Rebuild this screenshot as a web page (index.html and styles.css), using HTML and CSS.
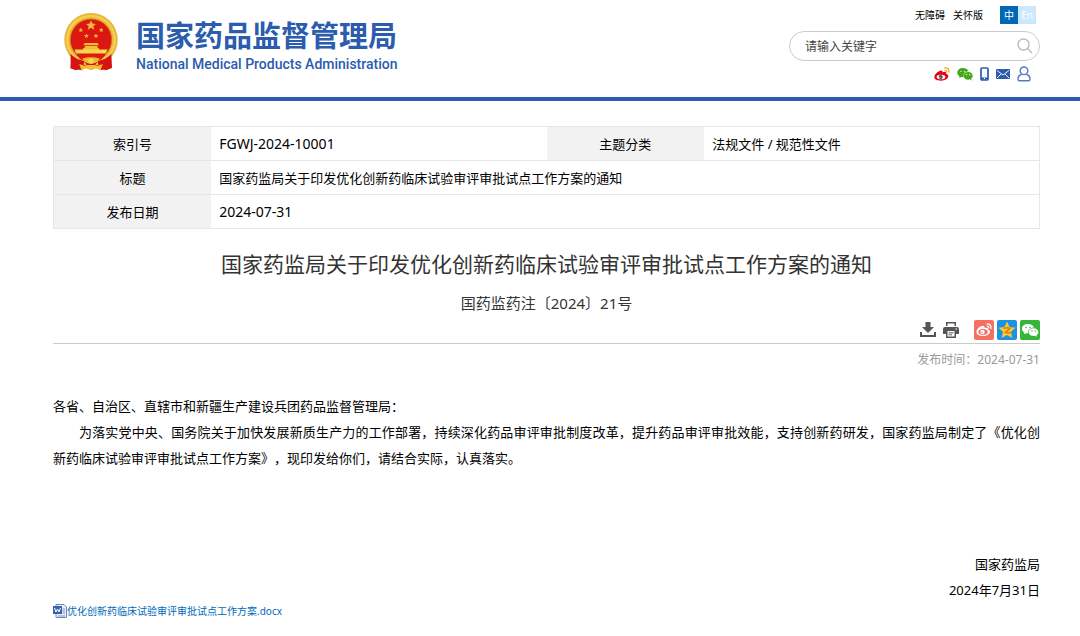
FILE: index.html
```html
<!DOCTYPE html>
<html lang="zh-CN">
<head>
    <meta charset="UTF-8">
    <meta name="viewport" content="width=device-width, initial-scale=1.0">
    <title>国家药监局关于印发优化创新药临床试验审评审批试点工作方案的通知</title>
    <link rel="stylesheet" href="styles.css">
</head>
<body>
    <header class="header">
        <a class="logo" href="#">
            <svg class="emblem" viewBox="0 0 164 176" aria-hidden="true">
                <path d="M24 122 L20 168 L36 174 L60 164 L82 172 L104 164 L128 174 L146 166 L142 122 Z" fill="#d3140f"/>
                <circle cx="82" cy="81" r="81" fill="#e9b234"/>
                <circle cx="82" cy="81" r="72" fill="none" stroke="#f5cd50" stroke-width="8"/>
                <circle cx="82" cy="81" r="63" fill="#dc1710" stroke="#c9891a" stroke-width="2"/>
                <path d="M82 22 l4 10 11 1 -8 7 3 11 -10 -6 -10 6 3 -11 -8 -7 11 -1z" fill="#f5b83c"/>
                <g fill="#f5b83c">
                    <path d="M51 44 l2 5 5 0 -4 4 2 5 -5 -3 -5 3 2 -5 -4 -4 5 0z"/>
                    <path d="M113 44 l2 5 5 0 -4 4 2 5 -5 -3 -5 3 2 -5 -4 -4 5 0z"/>
                    <path d="M68 62 l2 5 5 0 -4 4 2 5 -5 -3 -5 3 2 -5 -4 -4 5 0z"/>
                    <path d="M97 62 l2 5 5 0 -4 4 2 5 -5 -3 -5 3 2 -5 -4 -4 5 0z"/>
                </g>
                <path d="M63 91 H102 L106 98 H59 Z M63 100 H102 V106 H106 V118 H58 V106 H63 Z" fill="#f3bf35"/>
                <path d="M32 111 H132 L127 123 H37 Z" fill="#f9d64d"/>
                <path d="M36 125 H128 L112 142 H52 Z" fill="#df1b12"/>
                <path d="M20 124 Q35 142 63 146 L54 174 L20 168 Z M144 124 Q129 142 101 146 L110 174 L144 168 Z" fill="#d3140f"/>
                <path d="M56 138 Q82 130 108 138 L98 152 H66 Z" fill="#eeb92f"/>
                <path d="M46 155 L66 162 L82 150 L98 162 L118 155 L111 174 L96 168 L82 174 L68 168 L53 174 Z" fill="#f1bd31"/>
                <path d="M62 148 Q82 160 102 148 L95 158 H69 Z" fill="#d3140f"/>
                <circle cx="82" cy="146" r="8" fill="#f8d65a"/>
            </svg>
            <span class="logo-text">
                <span class="logo-cn">国家药品监督管理局</span>
                <span class="logo-en">National Medical Products Administration</span>
            </span>
        </a>
        <div class="tools">
            <div class="links">
                <a href="#">无障碍</a>
                <a href="#">关怀版</a>
                <span class="lang"><a class="on" href="#">中</a><a href="#">En</a></span>
            </div>
            <form class="search">
                <input type="text" name="q" placeholder="请输入关键字" aria-label="请输入关键字">
                <button type="submit" aria-label="搜索">
                    <svg viewBox="0 0 16 16" width="16" height="16"><circle cx="6.5" cy="6.5" r="5.5"/><path d="M10.5 10.5 L15 15"/></svg>
                </button>
            </form>
            <nav class="social">
                <a href="#" aria-label="微博">
                    <svg viewBox="0 0 48 42" width="16" height="14">
                        <path d="M20 11 C12 12 1 22 1 30 C1 38 10 41 21 41 C34 41 43 34 43 27 C43 23 39 21 36 20 C38 14 34 12 25 16 C27 11 24 9 20 11Z" fill="#e60012"/>
                        <ellipse cx="21" cy="30" rx="13" ry="7" fill="#fff"/>
                        <circle cx="20" cy="30" r="6" fill="#444"/><circle cx="18" cy="31" r="2" fill="#fff"/>
                        <path d="M31 3 Q46 1 45 17 M32 10 Q39 9 38 16" fill="none" stroke="#f5a623" stroke-width="4"/>
                    </svg>
                </a>
                <a href="#" aria-label="微信">
                    <svg viewBox="0 0 48 42" width="16" height="14">
                        <path d="M18 3 C8 3 1 9 1 17 C1 22 4 26 8 28 L6 34 L13 30 L20 31 C17 20 25 13 35 13 C33 7 26 3 18 3Z M34 15 C26 15 20 20 20 26 C20 33 26 38 34 38 L38 37 L44 41 L42 35 C45 33 47 30 47 26 C47 20 41 15 34 15Z" fill="#45a81a"/>
                        <g fill="#fff"><circle cx="12" cy="13" r="2"/><circle cx="23" cy="13" r="2"/><circle cx="29" cy="23" r="2"/><circle cx="38" cy="23" r="2"/></g>
                    </svg>
                </a>
                <a href="#" aria-label="手机版">
                    <svg viewBox="0 0 9 14" width="9" height="14"><rect x="1" y="1" width="7" height="12" rx="1" fill="#fff" stroke="#2b5cad" stroke-width="1.700"/><path d="M1 11.500 H8" stroke="#2b5cad" stroke-width="2"/><path d="M4 11.500 H5" stroke="#fff"/></svg>
                </a>
                <a href="#" aria-label="邮箱">
                    <svg viewBox="0 0 14 10" width="14" height="10"><rect width="14" height="10" rx="1" fill="#2b5cad"/><path d="M1 1.500 L7 6 L13 1.500 M1 9 L5 5 M13 9 L9 5" fill="none" stroke="#fff" stroke-width=".9"/></svg>
                </a>
                <a class="user" href="#" aria-label="个人中心">
                    <svg viewBox="0 0 14 16" width="14" height="16"><g fill="none" stroke="#5878bd" stroke-width="1.400"><circle cx="7" cy="4.800" r="3.800"/><path d="M4.500 8.500 Q1 9.500 1 13 Q1 14.800 2.500 14.800 H11.500 Q13 14.800 13 13 Q13 9.500 9.500 8.500"/></g></svg>
                </a>
            </nav>
        </div>
    </header>

    <main class="content">
        <table class="info">
            <tr>
                <th>索引号</th>
                <td class="num">FGWJ-2024-10001</td>
                <th>主题分类</th>
                <td>法规文件 / 规范性文件</td>
            </tr>
            <tr>
                <th>标题</th>
                <td colspan="3">国家药监局关于印发优化创新药临床试验审评审批试点工作方案的通知</td>
            </tr>
            <tr>
                <th>发布日期</th>
                <td class="num" colspan="3">2024-07-31</td>
            </tr>
        </table>

        <h1>国家药监局关于印发优化创新药临床试验审评审批试点工作方案的通知</h1>
        <p class="doc-no">国药监药注〔2024〕21号</p>

        <div class="share">
            <button type="button" aria-label="下载">
                <svg viewBox="0 0 16 16" width="16" height="16" fill="#555"><path d="M5.500 0 H10.500 V5 H14 L8 11 L2 5 H5.500Z M0 10 H2 V13 H14 V10 H16 V15 H0Z"/></svg>
            </button>
            <button type="button" aria-label="打印">
                <svg viewBox="0 0 16 16" width="16" height="16"><path d="M3 0 H13 V4 H3Z M2 5 H14 Q16 5 16 7 V12 H13 V16 H3 V12 H0 V7 Q0 5 2 5Z" fill="#555"/><path d="M4.500 1.500 H11.500 V4 H4.500Z M4.500 9 H11.500 V14.500 H4.500Z M12.500 6.500 H14 V7.500 H12.500Z" fill="#fff"/><path d="M5.500 10.800 H10.500 M5.500 12.800 H9" stroke="#555"/></svg>
            </button>
            <a class="weibo" href="#" aria-label="分享到微博">
                <svg viewBox="0 0 20 20" width="20" height="20">
                    <rect width="20" height="20" rx="2" fill="#f56f64"/>
                    <path d="M8 6 C5 6.500 2.500 9.500 2.500 12 C2.500 14.700 5.500 16 9 16 C13 16 16 14 16 11.500 C16 10.300 15 9.700 14 9.500 C14.500 7.500 13 7.300 10.500 8 C11 6 9.500 5.500 8 6Z" fill="#fff"/>
                    <ellipse cx="9" cy="12" rx="4.700" ry="2.900" fill="#f56f64"/><circle cx="8.500" cy="12" r="2.200" fill="#fff"/><circle cx="8" cy="12.500" r=".8" fill="#f56f64"/>
                    <path d="M12.500 4 Q17.500 3.500 17 9 M12.800 6.200 Q15 6 14.900 8.200" fill="none" stroke="#fff" stroke-width="1.200"/>
                </svg>
            </a>
            <a href="#" aria-label="分享到QQ空间">
                <svg viewBox="0 0 20 20" width="20" height="20">
                    <rect width="20" height="20" rx="2" fill="#1b93e4"/>
                    <path d="M10 1.500 L12.500 7 L18.500 7.700 L14 11.800 L15.300 18 L10 15 L4.700 18 L6 11.800 L1.500 7.700 L7.500 7Z" fill="#fdc62b"/>
                    <path d="M6.500 8.300 Q10 7.300 13 8.300 L8.500 12.500 Q11 13.200 13.800 12.500" fill="none" stroke="#d97b13" stroke-width="1.400"/>
                </svg>
            </a>
            <a href="#" aria-label="分享到微信">
                <svg viewBox="0 0 20 20" width="20" height="20">
                    <rect width="20" height="20" rx="2" fill="#35b63b"/>
                    <path d="M8 4 C4.500 4 2 6 2 8.800 C2 10.500 3 11.800 4.300 12.600 L3.800 14.300 L6 13.300 L8 13.500 C7.500 10 10.500 7.500 14 7.500 C13.300 5.500 11 4 8 4Z M13.500 8.300 C10.500 8.300 8.700 10 8.700 12.200 C8.700 14.500 10.700 16 13.500 16 L15 15.800 L17 16.800 L16.500 15.200 C17.700 14.400 18.400 13.400 18.400 12.200 C18.400 10 16.300 8.300 13.500 8.300Z" fill="#fff"/>
                    <g fill="#35b63b"><circle cx="6" cy="7.500" r=".8"/><circle cx="10" cy="7.500" r=".8"/><circle cx="12" cy="11" r=".7"/><circle cx="15.200" cy="11" r=".7"/></g>
                </svg>
            </a>
        </div>
        <p class="pub-time">发布时间：2024-07-31</p>

        <article class="article">
            <p>各省、自治区、直辖市和新疆生产建设兵团药品监督管理局：</p>
            <p class="indent">为落实党中央、国务院关于加快发展新质生产力的工作部署，持续深化药品审评审批制度改革，提升药品审评审批效能，支持创新药研发，国家药监局制定了《优化创新药临床试验审评审批试点工作方案》，现印发给你们，请结合实际，认真落实。</p>
            <div class="sign">
                <p>国家药监局</p>
                <p>2024年7月31日</p>
            </div>
        </article>

        <a class="attach" href="#">
            <svg viewBox="0 0 14 14" width="14" height="14"><path d="M3 .5 H11 L13.500 3 V13.500 H3Z" fill="#e9effa" stroke="#6d86b8"/><path d="M9.500 5 H12 M9.500 7 H12 M9.500 9 H12 M5 12 H12" stroke="#7d95c6"/><rect y="2" width="9" height="8" fill="#3c62ad"/><path d="M1.500 4 L3 8 L4.500 5 L6 8 L7.500 4" fill="none" stroke="#fff"/></svg>
            <span>优化创新药临床试验审评审批试点工作方案.docx</span>
        </a>
    </main>
</body>
</html>
```
FILE: styles.css
```css
body {
    margin: 0;
    background: #fff;
    color: #000;
    font-family: "Noto Sans", "Noto Sans CJK SC", sans-serif;
    font-size: 13px;
    text-spacing-trim: space-all;
}
a {
    color: inherit;
    text-decoration: none;
}
p, h1 {
    margin: 0;
}
svg {
    display: block;
}
.header {
    display: flex;
    justify-content: space-between;
    height: 97px;
    padding: 0 40px 0 64px;
    border-bottom: 4px solid #2b5cad;
}
.logo {
    display: flex;
    gap: 18px;
    padding-top: 13px;
    color: #2b5cad;
}
.emblem {
    width: 54px;
    height: 58px;
}
.logo-text {
    display: flex;
    flex-direction: column;
    padding-top: 4px;
}
.logo-cn {
    font-size: 29px;
    font-weight: bold;
    line-height: 38px;
    white-space: nowrap;
}
.logo-en {
    font-family: Roboto, "Liberation Sans", sans-serif;
    font-size: 14px;
    font-weight: 500;
    line-height: 18px;
}
.tools {
    width: 251px;
    padding-top: 6px;
}
.links {
    display: flex;
    justify-content: flex-end;
    gap: 8px;
    padding-right: 4px;
    font-size: 10px;
    line-height: 18px;
}
.lang {
    display: flex;
    margin-left: 9px;
}
.lang a {
    width: 18px;
    height: 18px;
    background: #cce8ff;
    color: #fff;
    text-align: center;
}
.lang .on {
    background: #0068b7;
}
.search {
    display: flex;
    align-items: center;
    box-sizing: border-box;
    height: 30px;
    margin-top: 7px;
    padding: 0 6px 0 15px;
    border: 1px solid #ccc;
    border-radius: 15px;
}
.search input {
    flex: 1;
    min-width: 0;
    padding: 0;
    border: 0;
    outline: 0;
    font-family: inherit;
    font-size: 12px;
}
.search input::placeholder {
    color: #444;
}
button {
    padding: 0;
    border: 0;
    background: none;
    cursor: pointer;
}
.search svg {
    fill: none;
    stroke: #bbb;
    stroke-width: 1.4;
}
.social {
    display: flex;
    align-items: center;
    justify-content: flex-end;
    gap: 7px;
    height: 16px;
    margin-top: 5px;
    padding-right: 9px;
}
.content {
    padding: 25px 40px 16px 53px;
}
.info {
    width: 100%;
    border: 1px solid #e6e6e6;
    border-collapse: collapse;
    table-layout: fixed;
}
.info th,
.info td {
    height: 33px;
    padding: 0 8px;
    border-bottom: 1px solid #e6e6e6;
    line-height: 20px;
}
.info th {
    width: 16%;
    box-sizing: border-box;
    background: #f2f2f2;
    font-weight: normal;
}
.info .num {
    font-size: 14px;
}
h1 {
    margin-top: 19px;
    color: #333;
    font-size: 21px;
    font-weight: normal;
    line-height: 32px;
    text-align: center;
}
.doc-no {
    margin-top: 13px;
    color: #333;
    font-size: 15px;
    line-height: 20px;
    text-align: center;
}
.share {
    display: flex;
    align-items: center;
    justify-content: flex-end;
    gap: 3px;
    height: 27px;
    margin-top: 3px;
    border-bottom: 1px solid #ccc;
}
.share button {
    margin-right: 4px;
}
.share .weibo {
    margin-left: 8px;
}
.pub-time {
    margin-top: 6px;
    color: #999;
    font-size: 12px;
    line-height: 20px;
    text-align: right;
}
.article {
    margin-top: 23px;
    line-height: 26px;
    text-align: justify;
}
.indent {
    text-indent: 2em;
}
.sign {
    margin-top: 80px;
    text-align: right;
}
.attach {
    display: flex;
    align-items: center;
    color: #0068b7;
    font-size: 10px;
    line-height: 16px;
}
```
